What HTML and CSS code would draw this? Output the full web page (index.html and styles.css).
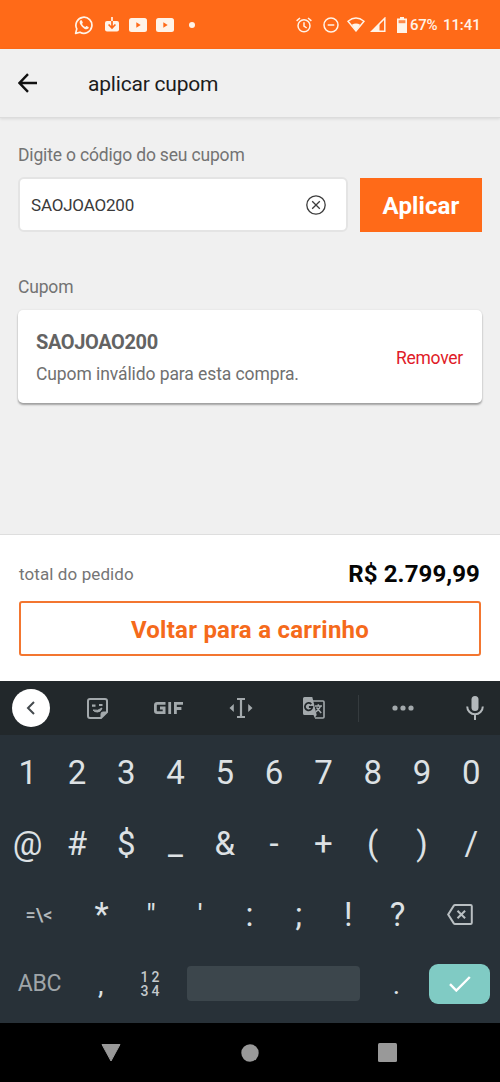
FILE: index.html
```html
<!DOCTYPE html>
<html lang="pt-BR">
<head>
<meta charset="utf-8">
<title>aplicar cupom</title>
<link rel="stylesheet" href="styles.css">
</head>
<body>
<div class="phone">
  <div class="status">
    <div class="status-left">
      <svg width="20" height="20" viewBox="0 0 20 20"><path d="M1.6 18.4l1.2-4.5A8 8 0 1 1 6 17.200z" fill="none" stroke="currentColor" stroke-width="1.700" stroke-linejoin="round"/><path d="M6.300 5.500C5 7 5.600 9 8 11.700c2.500 2.600 4.700 3.300 6.300 1.800.5-.5.6-1.200.2-1.500l-1.900-1c-.4-.2-.8.600-1.200 1-1.500-.5-2.900-1.900-3.400-3.200.4-.4 1-.9.800-1.300L7.900 5.600c-.2-.5-1-.6-1.600-.1z" fill="currentColor"/></svg>
      <svg width="14" height="15" viewBox="0 0 14 15"><path d="M2 4h10a2 2 0 0 1 2 2v6.500a2 2 0 0 1-2 2H2a2 2 0 0 1-2-2V6a2 2 0 0 1 2-2z" fill="currentColor"/><path d="M7 4v6.500M3.600 7.500L7 11l3.400-3.500" fill="none" stroke="#ff6a18" stroke-width="1.700"/><path d="M7 0v4" stroke="currentColor" stroke-width="1.700"/></svg>
      <svg class="tube" width="18" height="14" viewBox="0 0 18 14"><rect width="18" height="14" rx="2.500" fill="currentColor"/><path d="M7.300 4.300v5.400L11.700 7z" fill="#ff6a18"/></svg>
      <svg class="tube" width="18" height="14" viewBox="0 0 18 14"><rect width="18" height="14" rx="2.500" fill="currentColor"/><path d="M7.300 4.300v5.400L11.700 7z" fill="#ff6a18"/></svg>
      <span class="status-dot"></span>
    </div>
    <div class="status-right">
      <svg width="16" height="16" viewBox="0 0 16 16" fill="none" stroke="currentColor" stroke-width="1.500"><circle cx="8" cy="8.800" r="6"/><path d="M.6 3.900L4 1M15.400 3.900L12 1M8 5.200v4l2.700 1.800"/></svg>
      <svg class="dnd" width="16" height="16" viewBox="0 0 16 16" fill="none" stroke="currentColor" stroke-width="1.500"><circle cx="8" cy="8" r="7"/><path d="M4.700 8h6.600"/></svg>
      <svg class="wifi" width="18" height="15" viewBox="0 0 18 15"><path d="M1 4.300q8-6.600 16 0L9 14z" fill="none" stroke="currentColor" stroke-width="1.400"/><path d="M4.800 7.800q4.200-2.400 8.400 0L9 14z" fill="currentColor"/></svg>
      <svg class="signal" width="16" height="15" viewBox="0 0 16 15"><path d="M1.800 14.200L14.800 1.200v13z" fill="none" stroke="currentColor" stroke-width="1.500"/><path d="M1 15L9.500 6.500V15z" fill="currentColor"/></svg>
      <svg class="battery" width="10" height="16" viewBox="0 0 10 16"><path d="M3 0h4v1.600H10V16H0V1.600h3z" fill="currentColor"/><path d="M1.600 3.200h6.800v3H1.600z" fill="#ff8a4a"/></svg>
      <span class="percent">67%</span>
      <span class="clock">11:41</span>
    </div>
  </div>

  <header class="appbar">
    <svg width="20" height="20" viewBox="0 0 20 20" fill="none" stroke="#111" stroke-width="2.400"><path d="M19 10H1.800M10 1.200L1.500 10l8.500 8.800"/></svg>
    <h1 class="title">aplicar cupom</h1>
  </header>

  <main class="content">
    <p class="label code-label">Digite o código do seu cupom</p>
    <div class="form">
      <div class="field">
        <span class="code">SAOJOAO200</span>
        <svg width="20" height="20" viewBox="0 0 20 20" fill="none" stroke="#3c3c3c" stroke-width="1.300"><circle cx="10" cy="10" r="9.200"/><path d="M6.200 6.200l7.600 7.600M13.800 6.200l-7.600 7.600"/></svg>
      </div>
      <button class="apply"><span>Aplicar</span></button>
    </div>
    <p class="label coupon-label">Cupom</p>
    <section class="card">
      <div>
        <div class="card-code">SAOJOAO200</div>
        <div class="card-text">Cupom inválido para esta compra.</div>
      </div>
      <span class="remove">Remover</span>
    </section>
  </main>

  <footer class="summary">
    <div class="total">
      <span class="total-label">total do pedido</span>
      <span class="price">R$ 2.799,99</span>
    </div>
    <button class="back"><span>Voltar para a carrinho</span></button>
  </footer>

  <div class="tools">
    <span class="collapse"><svg width="10" height="14" viewBox="0 0 10 14" fill="none" stroke="#444a4e" stroke-width="2"><path d="M8 1L2 7l6 6"/></svg></span>
    <svg class="sticker" width="21" height="21" viewBox="0 0 21 21" fill="none" stroke="currentColor" stroke-width="2"><path d="M3 1h15a2 2 0 0 1 2 2v11l-6 6H3a2 2 0 0 1-2-2V3a2 2 0 0 1 2-2z"/><path d="M14 20v-4a2 2 0 0 1 2-2h4l-6 6z" fill="currentColor" stroke-width="1"/><path d="M5 7.700h3.500M12 7h3.500" stroke-width="2.200"/><path d="M6 12q5 1.500 9-2-1 4-4.500 4T6 12z" fill="currentColor" stroke-width="1"/></svg>
    <svg class="gif" width="29" height="12" viewBox="0 0 29 12" fill="none" stroke="currentColor" stroke-width="2.800"><path d="M11.500 1.400H3.200q-1.800 0-1.800 1.800v5.600q0 1.800 1.800 1.800h6.900V6H6M15.700 0v12M21.400 12V1.400H29M21.400 6.500h6"/></svg>
    <svg class="cursor" width="24" height="20" viewBox="0 0 24 20"><path d="M8 1h8M8 19h8M12 1v18" stroke="currentColor" stroke-width="2.200"/><path d="M4.800 6v8L.5 10zM19.200 6v8l4.300-4z" fill="currentColor"/></svg>
    <svg class="translate" width="22" height="22" viewBox="0 0 22 22"><path d="M10 4h10a1 1 0 0 1 1 1v15a1 1 0 0 1-1 1h-8" fill="none" stroke="currentColor" stroke-width="1.600"/><path d="M1.500 0h7.800l4.400 18H1.500A1.500 1.500 0 0 1 0 16.500v-15A1.500 1.500 0 0 1 1.500 0z" fill="currentColor"/><path d="M10.500 18h3.200l-2 3z" fill="currentColor"/><path d="M8.300 7.100a3.700 3.700 0 1 0 1 2.900H5.900" fill="none" stroke="#22282b" stroke-width="1.800"/><path d="M12 9h7M15.300 7.300V9M17.500 9q-.8 3-4.500 5.800M13.500 10.500l4.700 5.500" fill="none" stroke="currentColor" stroke-width="1.500"/></svg>
    <span class="divider"></span>
    <svg class="more" width="22" height="6" viewBox="0 0 22 6" fill="currentColor"><circle cx="3" cy="3" r="2.600"/><circle cx="11" cy="3" r="2.600"/><circle cx="19" cy="3" r="2.600"/></svg>
    <svg class="mic" width="18" height="24" viewBox="0 0 18 24"><rect x="5.500" y="0" width="7" height="15" rx="3.500" fill="currentColor"/><path d="M1.200 10.500a7.800 7.800 0 0 0 15.600 0M9 18v6" fill="none" stroke="currentColor" stroke-width="2"/></svg>
  </div>

  <div class="keyboard">
    <div class="keys ten"><span>1</span><span>2</span><span>3</span><span>4</span><span>5</span><span>6</span><span>7</span><span>8</span><span>9</span><span>0</span></div>
    <div class="keys ten"><span>@</span><span>#</span><span>$</span><span>_</span><span>&amp;</span><span>-</span><span>+</span><span>(</span><span>)</span><span>/</span></div>
    <div class="keys nine"><span class="symbols">=\&lt;</span><span>*</span><span class="quote">"</span><span class="quote">'</span><span>:</span><span>;</span><span>!</span><span>?</span><svg width="26" height="21" viewBox="0 0 26 21" fill="none" stroke="#b9bfc2" stroke-width="2"><path d="M8 1h15.500a1.300 1.300 0 0 1 1.300 1.300v16.400a1.300 1.300 0 0 1-1.300 1.300H8a1.500 1.500 0 0 1-1.200-.6L1.200 10.500l5.600-8.900A1.500 1.500 0 0 1 8 1z"/><path d="M10.500 6.700l7.600 7.600M18.100 6.700l-7.600 7.600"/></svg></div>
    <div class="keys bottom"><span class="abc">ABC</span><span class="mark">,</span><span class="numpad"><b>1</b><b>2</b><b>3</b><b>4</b></span><span class="space"></span><span class="mark">.</span><span class="enter"><svg width="22" height="16" viewBox="0 0 22 16" fill="none" stroke="#fff" stroke-width="2.400"><path d="M1 8.200l6.300 6.300L20.800 1"/></svg></span></div>
  </div>

  <nav class="navbar">
    <svg width="20" height="18" viewBox="0 0 20 18"><path d="M1 .5h18L10 17z" fill="currentColor" stroke="currentColor" stroke-linejoin="round"/></svg>
    <svg width="18" height="18" viewBox="0 0 18 18"><circle cx="9" cy="9" r="8.700" fill="currentColor"/></svg>
    <svg width="19" height="19" viewBox="0 0 19 19"><rect width="19" height="19" rx="1.500" fill="currentColor"/></svg>
  </nav>
</div>
</body>
</html>
```
FILE: styles.css
```css
* { box-sizing: border-box; }
body { margin: 0; font-family: Roboto, "Liberation Sans", sans-serif; background: #f0f0f0; }
h1, p { margin: 0; font-weight: 400; }
svg { display: block; flex: none; }
button { font-family: inherit; padding: 0; margin: 0; border-radius: 0; white-space: nowrap; }
.phone { width: 500px; height: 1082px; display: flex; flex-direction: column; overflow: hidden; white-space: nowrap; }

.status { height: 49px; flex: none; background: #ff6a18; color: #fff3e8; display: flex; justify-content: space-between; align-items: center; padding: 0 20px 0 74px; }
.status-left, .status-right { display: flex; align-items: center; }
.status-left { gap: 9px; }
.status-left svg:nth-child(2) { margin-left: 2px; }
.status-left .tube:nth-child(3) { margin-left: 1px; }
.status-dot { width: 6px; height: 6px; border-radius: 50%; background: #fff3e8; margin-left: 6px; }
.dnd { margin-left: 11px; }
.wifi { margin-left: 8px; }
.signal { margin-left: 5px; }
.battery { margin-left: 11px; }
.percent, .clock { font-size: 15px; font-weight: 500; }
.percent { margin-left: 3px; width: 33px; letter-spacing: -0.3px; }
.clock { width: 37px; letter-spacing: -0.1px; }

.appbar { height: 69px; flex: none; display: flex; align-items: center; padding: 0 18px; gap: 50px; border-bottom: 1px solid #dcdcdc; box-shadow: 0 1px 3px rgba(0, 0, 0, 0.1); }
.title { font-size: 21px; letter-spacing: -0.2px; color: #1c1c1c; line-height: 30px; padding-top: 2px; }

.content { flex: none; height: 416px; padding: 26px 18px 0; }
.label { font-size: 17.500px; line-height: 22px; letter-spacing: -0.17px; color: #737373; }
.form { display: flex; gap: 12px; margin-top: 11px; }
.field { width: 330px; height: 55px; background: #fff; border: 2px solid #e4e4e4; border-radius: 6px; display: flex; align-items: center; justify-content: space-between; padding: 0 20px 0 11px; }
.code { font-size: 17px; letter-spacing: -0.2px; color: #3a3a3a; }
.apply { flex: 1; height: 54px; margin-top: 1px; background: #ff6a18; border: 0; color: #fff; font-size: 24px; letter-spacing: 0.1px; font-weight: 700; padding-top: 2px; }
.coupon-label { margin-top: 44px; }
.card { margin-top: 12px; height: 93px; background: #fff; border-radius: 5px; box-shadow: 0 2px 2px rgba(0, 0, 0, 0.32), 0 0 2px rgba(0, 0, 0, 0.1); display: flex; justify-content: space-between; padding: 20px 19px 0 18px; }
.card-code { font-size: 20px; line-height: 24px; letter-spacing: -0.38px; font-weight: 700; color: #636363; }
.card-text { font-size: 17.500px; line-height: 22px; letter-spacing: -0.09px; margin-top: 9px; color: #707070; }
.remove { font-size: 17.500px; line-height: 22px; letter-spacing: -0.25px; padding-top: 17px; color: #df1b28; }

.summary { flex: none; height: 147px; background: #fff; border-top: 1px solid #dedede; padding: 24px 19px 0; }
.total { display: flex; justify-content: space-between; align-items: center; height: 30px; }
.total-label { font-size: 17px; letter-spacing: 0.1px; color: #757575; }
.price { font-size: 24px; letter-spacing: 0.1px; padding-right: 1px; font-weight: 700; color: #050505; }
.back { display: block; width: 462px; height: 55px; margin-top: 12px; background: #fff; border: 2px solid #f37630; border-radius: 3px; color: #f56a1b; font-size: 24px; letter-spacing: 0.24px; font-weight: 700; padding-top: 2px; }

.tools { flex: none; height: 54px; background: #22282b; color: #a3a9ac; display: flex; align-items: center; padding-left: 12px; }
.collapse { width: 38px; height: 38px; border-radius: 50%; background: #fff; display: flex; align-items: center; justify-content: center; }
.sticker { margin-left: 37px; }
.gif { margin-left: 46px; }
.cursor { margin-left: 46px; }
.translate { margin-left: 50px; }
.divider { width: 1px; height: 27px; background: #353b3e; margin-left: 33px; }
.more { margin-left: 33px; }
.mic { margin-left: 52px; color: #b4b9bc; }

.keyboard { flex: none; height: 288px; background: #283138; color: #dde1e4; padding: 2px 4px 0; }
.keys { display: grid; height: 71px; align-items: center; justify-items: center; font-size: 33px; line-height: 40px; }
.ten { grid-template-columns: repeat(10, 49.300px); margin-left: -1px; }
.nine { grid-template-columns: 73px repeat(7, 49.300px) 75px; }
.bottom { grid-template-columns: 73px 49.300px 49.300px 197.200px 49.300px 75px; height: 67px; margin-left: -1px; }
.symbols { font-size: 18px; font-weight: 500; color: #b3b9bc; padding-right: 3px; }
.quote { font-size: 30px; }
.mark { font-size: 28px; padding-top: 3px; }
.abc { font-size: 23px; letter-spacing: -0.3px; color: #9fa5a9; }
.numpad { display: grid; grid-template-columns: 11px 11px; justify-items: center; font-size: 14px; line-height: 14px; color: #c4c9cc; }
.numpad b { font-weight: 500; }
.space { width: 173px; height: 35px; border-radius: 4px; background: #3c464c; }
.enter { width: 61px; height: 40px; margin-left: 2px; border-radius: 9px; background: #80cbc4; display: flex; align-items: center; justify-content: center; }

.navbar { flex: 1; background: #000; color: #999; display: flex; align-items: center; justify-content: space-between; padding: 0 103px 0 101px; }
```
